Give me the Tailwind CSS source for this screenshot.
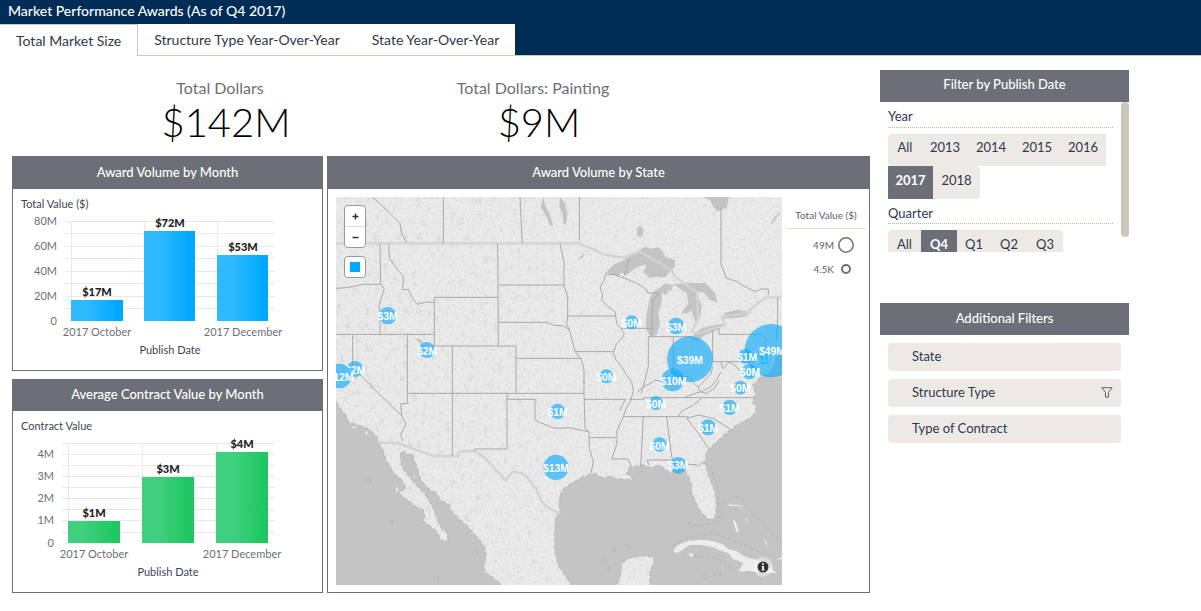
<!DOCTYPE html>
<html lang="en">
<head>
<meta charset="utf-8">
<meta name="viewport" content="width=device-width, initial-scale=1">
<title>Market Performance Awards</title>
<script src="https://cdn.jsdelivr.net/npm/@tailwindcss/browser@4"></script>
</head>
<body class="bg-white font-['Lato',sans-serif] text-sm text-[#2e384d]">
<header class="border-b border-[#cdc8bc] bg-[#002d56]">
  <h1 class="h-6 px-2 text-sm leading-[22px] font-medium text-white">Market Performance Awards (As of Q4 2017)</h1>
  <nav role="tablist" class="-mb-px flex h-8 text-sm">
    <button role="tab" aria-selected="true" class="border-t border-r border-[#cdc8bc] bg-white px-4">Total Market Size</button>
    <button role="tab" class="border-b border-[#cdc8bc] bg-white px-4">Structure Type Year-Over-Year</button>
    <button role="tab" class="border-b border-[#cdc8bc] bg-white px-4">State Year-Over-Year</button>
  </nav>
</header>

<div class="flex items-start gap-[10px] pr-[72px] pl-3">
<main class="min-w-0 flex-1 pt-5">
  <section class="flex text-center">
    <div class="w-[416px]"><h2 class="text-base leading-6 text-[#6c6f77]">Total Dollars</h2><p class="h-14 pl-3 text-[40px] leading-11 font-light text-black">$142M</p></div>
    <div class="w-[210px]"><h2 class="text-base leading-6 text-[#6c6f77]">Total Dollars: Painting</h2><p class="h-14 pl-3 text-[40px] leading-11 font-light text-black">$9M</p></div>
  </section>

  <div class="grid grid-cols-[311px_minmax(0,1fr)] items-start gap-x-1">
    <div class="flex flex-col gap-2">
      <section class="border border-[#6c6f77]">
        <h2 class="h-8 bg-[#6c6f77] text-center text-[13px] leading-[30px] font-medium text-white">Award Volume by Month</h2>
        <svg viewBox="0 0 309 181" class="block w-full" role="img" aria-label="Award volume by month">
          <defs><linearGradient id="blue"><stop offset=".3" stop-color="#2fb9ff"/><stop offset=".9" stop-color="#00a8ff"/></linearGradient></defs>
          <path d="M52 32.5H262M52 44.5H262M52 57.5H262M52 69.5H262M52 82.5H262M52 94.5H262M52 107.5H262M52 119.5H262M58.5 32V132M131.5 32V132M204.5 32V132" stroke="#e9e9e9" fill="none"/>
          <g fill="url(#blue)"><rect x="58" y="111" width="52" height="21"/><rect x="131" y="42" width="51" height="90"/><rect x="204" y="66" width="51" height="66"/></g>
          <g font-size="11" fill="#3b4559"><text x="8" y="19">Total Value ($)</text><text x="157" y="165" text-anchor="middle">Publish Date</text></g>
          <g font-size="11" fill="#6c6f77" text-anchor="end"><text x="44" y="36">80M</text><text x="44" y="61">60M</text><text x="44" y="86">40M</text><text x="44" y="111">20M</text><text x="44" y="136">0</text></g>
          <g font-size="11" fill="#6c6f77" text-anchor="middle"><text x="84" y="147">2017 October</text><text x="230" y="147">2017 December</text></g>
          <g font-size="11" font-weight="900" fill="#222" text-anchor="middle"><text x="84" y="107">$17M</text><text x="157" y="38">$72M</text><text x="230" y="62">$53M</text></g>
        </svg>
      </section>
      <section class="border border-[#6c6f77]">
        <h2 class="h-[31px] bg-[#6c6f77] text-center text-[13px] leading-7 font-medium text-white">Average Contract Value by Month</h2>
        <svg viewBox="0 0 309 181" class="block w-full" role="img" aria-label="Average contract value by month">
          <defs><linearGradient id="green"><stop offset=".3" stop-color="#40d080"/><stop offset=".9" stop-color="#1fc761"/></linearGradient></defs>
          <path d="M49 32.5H262M49 43.5H262M49 54.5H262M49 65.5H262M49 76.5H262M49 87.5H262M49 98.5H262M49 109.5H262M49 121.5H262M55.5 32V132M129.5 32V132M203.5 32V132" stroke="#e9e9e9" fill="none"/>
          <g fill="url(#green)"><rect x="55" y="110" width="52" height="22"/><rect x="129" y="66" width="52" height="66"/><rect x="203" y="41" width="52" height="91"/></g>
          <g font-size="11" fill="#3b4559"><text x="8" y="19">Contract Value</text><text x="155" y="165" text-anchor="middle">Publish Date</text></g>
          <g font-size="11" fill="#6c6f77" text-anchor="end"><text x="41" y="47">4M</text><text x="41" y="69">3M</text><text x="41" y="91">2M</text><text x="41" y="113">1M</text><text x="41" y="136">0</text></g>
          <g font-size="11" fill="#6c6f77" text-anchor="middle"><text x="81" y="147">2017 October</text><text x="229" y="147">2017 December</text></g>
          <g font-size="11" font-weight="900" fill="#222" text-anchor="middle"><text x="81" y="106">$1M</text><text x="155" y="62">$3M</text><text x="229" y="37">$4M</text></g>
        </svg>
      </section>
    </div>

    <section class="border border-[#6c6f77]">
      <h2 class="h-8 bg-[#6c6f77] text-center text-[13px] leading-[30px] font-medium text-white">Award Volume by State</h2>
      <div class="flex items-start gap-1 pt-2 pr-[3px] pb-[7px] pl-2">
        <div class="relative min-w-0 flex-1">
          <svg viewBox="0 0 1338 1164" class="block w-full" role="img" aria-label="Award volume map of the United States">
            <defs>
              <filter id="paper" x="0" y="0" width="100%" height="100%"><feTurbulence type="fractalNoise" baseFrequency=".13" numOctaves="3" seed="4"/><feColorMatrix values="0 0 0 0 .5  0 0 0 0 .5  0 0 0 0 .5  .6 0 0 0 -.24"/></filter>
              <filter id="relief" x="0" y="0" width="100%" height="100%"><feTurbulence type="fractalNoise" baseFrequency=".07 .045" numOctaves="3" seed="11"/><feColorMatrix values="0 0 0 0 .5  0 0 0 0 .5  0 0 0 0 .5  0 4 0 0 -2.4"/></filter>
              <linearGradient id="west"><stop offset="0" stop-color="#fff" stop-opacity=".4"/><stop offset=".4" stop-color="#fff" stop-opacity=".3"/><stop offset=".6" stop-color="#fff" stop-opacity=".08"/></linearGradient>
              <mask id="reliefMask"><rect width="1338" height="1164" fill="url(#west)"/></mask>
            </defs>
            <rect width="1338" height="1164" fill="#ebebeb"/>
            <rect width="1338" height="1164" filter="url(#paper)"/>
            <g mask="url(#reliefMask)"><rect width="1338" height="1164" filter="url(#relief)"/></g>

            <!-- oceans -->
            <g fill="#c4c4c4" stroke="#bcbcbc" stroke-width="4" stroke-linejoin="round" stroke-dasharray="14 7">
              <path d="M0 614L12 634 32 659 37 676 67 684 102 699 122 719 127 736 142 764 150 790 162 809 172 829 197 849 210 874 187 886 200 900 222 914 240 930 262 939 266 958 260 974 280 986 302 1004 312 1025 322 1034 337 1029 332 1004 318 996 307 974 298 950 292 934 278 910 267 889 250 874 237 859 217 834 205 820 197 804 192 767 205 764 214 773 230 772 234 790 242 809 252 844 266 864 282 879 300 887 312 909 342 925 342 939 372 969 392 985 412 1009 432 1030 447 1054 450 1082 442 1109 450 1128 467 1139 497 1164V1180H-10V614Z"/>
              <path d="M672 899L677 884 690 870 707 859 742 839 777 829 790 838 807 844 822 837 842 846 892 849 884 838 872 829 880 812 892 809 922 804 947 812 967 804 990 818 1002 829 1042 814 1057 839 1067 864 1065 880 1072 899 1087 934 1107 959 1122 969 1137 962 1142 924 1137 884 1117 834 1107 799 1112 764 1137 739 1177 704 1202 684 1242 664 1257 649 1262 629 1250 615 1259 590 1250 565 1262 554 1272 539 1297 529 1312 514 1320 480 1350 450V1180H942V1124L955 1094 952 1079 917 1076 877 1084 857 1099 852 1139 837 1180H717L687 1134 667 1104 657 1064 656 1010 659 964 672 940 670 920Z"/>
            </g>
            <g fill="none" stroke="#b2b2b2" stroke-width="2.5" stroke-dasharray="12 7">
              <path d="M1160 955Q1150 910 1190 902Q1225 900 1245 940L1290 990 1338 1038M1055 980Q1090 995 1130 975L1148 958V880L1120 800M1010 1045L1060 1020 1130 1010 1190 1030 1280 1070 1320 1080M1035 1075L1140 1080 1200 1125 1338 1130M1160 960L1125 1005"/>
              <circle cx="97" cy="850" r="8"/><circle cx="166" cy="975" r="5"/><circle cx="418" cy="1072" r="9"/><circle cx="300" cy="1145" r="8"/><circle cx="833" cy="1059" r="6"/><circle cx="878" cy="1049" r="7"/><circle cx="809" cy="1094" r="7"/><circle cx="816" cy="1113" r="5"/><circle cx="1107" cy="1140" r="7"/><circle cx="1146" cy="1130" r="8"/><circle cx="1065" cy="984" r="7"/>
            </g>
            <!-- islands -->
            <g fill="#ececec">
              <path d="M1012 1064Q1015 1048 1037 1039L1060 1031 1087 1029 1115 1030 1137 1034 1160 1042 1177 1056 1200 1062 1227 1079 1267 1090 1300 1108 1322 1129 1290 1128 1260 1124 1235 1122 1207 1124 1222 1098 1190 1085 1177 1069 1150 1060 1137 1052 1097 1044 1060 1044 1040 1058 1022 1069Z"/>
              <path d="M1058 1068L1072 1070 1070 1080 1060 1078ZM1190 968L1200 975 1210 1008 1200 1002ZM1178 922L1215 925 1220 940 1212 928 1178 926ZM1230 960L1236 972 1232 975ZM1280 1020L1298 1045 1290 1040ZM1318 1088L1338 1080V1086ZM45 690L65 688 55 694ZM90 700L98 712 88 712ZM232 835L238 840 234 846ZM180 868L188 878 180 884Z"/>
            </g>
            <!-- lakes -->
            <g fill="#c4c4c4">
              <path d="M807 229L832 204 872 184 890 172 902 164 927 149 945 155 967 151 980 162 987 179 1000 184 1017 188 1016 210 1003 222 987 241 960 239 940 242 922 226 932 205 920 204 897 214 872 234 858 226 845 240 830 232Z"/>
              <path d="M942 299L955 282 975 270 985 260 1012 264 1005 282 995 280 990 296 978 284 977 319 967 344 972 379 962 414 942 419 929 394 932 349Z"/>
              <path d="M1012 262L1057 257 1080 258 1107 259 1120 270 1137 289 1145 319 1138 314 1122 309 1107 290 1097 284 1082 289 1097 329 1092 364 1077 374 1067 339 1050 351 1036 347 1045 335 1057 319 1052 289Z"/>
              <path d="M1062 424L1097 394 1137 384 1172 379 1147 399 1107 414 1082 434ZM1154 364L1167 347 1202 339 1247 344 1227 359 1187 364Z"/>
              <path d="M1100 0L1122 9 1132 29 1145 44 1160 36 1172 34 1179 0ZM622 0L628 25 640 50 648 72 652 88 640 84 634 64 614 30ZM672 0L688 20 694 55 690 80 682 82 680 50 670 30ZM902 95L912 86 924 98 918 120 904 118ZM238 426L248 424 258 432 264 448 256 442ZM1305 80Q1315 55 1336 45Q1320 60 1310 80ZM725 185L745 170 740 184Z"/>
            </g>

            <!-- national borders -->
            <g fill="none" stroke="#d3d3d3" stroke-width="7" stroke-linejoin="round">
              <path d="M0 139H732L742 145 767 154 807 174 862 182 912 164 1007 219 1017 239 1057 269 1082 284 1087 364 1067 404 1087 409 1167 384 1157 359 1232 349 1257 324 1292 301H1338"/>
              <path d="M127 736L187 739 240 758 292 777H367V764L416 762 440 778 467 804 509 851 527 826Q552 822 572 839L600 875 617 914 640 935 672 949"/>
            </g>
            <!-- state and province borders -->
            <g fill="none" stroke="#a9a9a9" stroke-width="3" stroke-linejoin="round">
              <path d="M110 1L147 34 172 59 192 79 197 109 212 137M322 0V139M552 0L559 139M730 0V130M1155 32V204L1172 244 1200 252 1227 269 1257 284 1275 276 1297 276V294"/>
              <path d="M132 139L134 264 145 274 129 324 132 354V411M0 274L32 272 80 262H134M158 139L160 184 180 212 202 239 200 279 217 277 230 305 244 322 270 315 295 316M295 301H485M295 301V447H540M485 139L487 447M0 412H295M50 412V509L117 579 197 656M214 412V619L194 621 197 656 210 681 194 714 200 732M349 447V776"/>
              <path d="M487 264H687M487 376H637L650 384 682 387 702 399M540 484H737M540 447V589M214 589H744M513 589V756H416V762M513 607H597V669L615 678 632 684 650 692 672 694 700 692 717 696 757 704"/>
              <path d="M744 550V589L747 694 759 704 760 754 772 794 765 829M760 722H840M744 607H869L862 618 852 640"/>
              <path d="M672 139L685 199 683 230 685 269 695 299V357H837M695 357L692 379 702 405 717 464H832M717 464L737 489 744 519V560"/>
              <path d="M862 244L835 232 807 234 805 250 792 269 800 295 797 309 815 328 837 344 842 379 865 409 858 425 842 439 832 469 840 488 857 509 870 532 887 554 892 579 885 609 870 635 862 659 842 704 844 725 840 749 827 786H877L882 800 887 814M857 394H952M862 242L872 212 880 184M862 242L902 259 920 270 932 279 935 288 970 288 950 310 947 419M937 419V509L922 569 915 590M937 419H1067M1012 419V524"/>
              <path d="M905 585L922 569 942 560 957 549 975 553 992 540 1008 526 1030 540 1057 539 1075 560 1087 570 1107 549 1125 530 1130 509M1130 399V494H1257M1149 394V412H1277L1290 425 1285 440M1325 301V360L1322 430M1155 494L1160 515 1180 495 1197 505 1210 520 1247 539M1155 525L1140 550 1125 570 1097 584M1087 570L1092 584 1110 590 1135 575 1150 550"/>
              <path d="M879 607H922V602H1257M862 659H1057M1097 604L1070 625 1037 643 1027 658M922 659L914 809M992 659L1007 779 1012 789M934 789H1007L1012 799 1080 803 1088 808 1097 797 1107 799M1052 664L1087 654 1122 662 1132 664 1187 699M1052 664L1087 709 1105 735 1117 754M934 789L938 804M1045 602L1080 588 1097 584"/>
            </g>

            <!-- award bubbles, smaller ones under the large ones -->
            <g font-family="Liberation Sans" font-size="31" font-weight="700" text-anchor="middle">
              <g fill="#12acfb" fill-opacity=".66">
                <circle cx="155" cy="356" r="26"/><circle cx="273" cy="459" r="24"/><circle cx="57" cy="516" r="24"/>
                <circle cx="887" cy="376" r="21"/><circle cx="1020" cy="387" r="25"/><circle cx="1062" cy="487" r="69"/><circle cx="1010" cy="549" r="34"/><circle cx="811" cy="538" r="21"/>
                <circle cx="1228" cy="478" r="22"/><circle cx="1286" cy="480" r="21"/><circle cx="1240" cy="524" r="23"/><circle cx="1213" cy="572" r="21"/>
                <circle cx="665" cy="643" r="23"/><circle cx="660" cy="811" r="38"/><circle cx="960" cy="618" r="21"/><circle cx="1181" cy="631" r="23"/><circle cx="1116" cy="691" r="24"/><circle cx="971" cy="743" r="22"/><circle cx="1027" cy="805" r="25"/>
              </g>
              <g fill="#fff"><text x="57" y="532">$2M</text><text x="1288" y="494">$1M</text></g>
              <g fill="#12acfb" fill-opacity=".66"><circle cx="10" cy="537" r="37"/><circle cx="1306" cy="461" r="80"/></g>
              <g fill="#fff">
                <text x="155" y="368">$3M</text><text x="273" y="475">$2M</text><text x="14" y="552">$12M</text><text x="887" y="391">$0M</text><text x="1020" y="402">$3M</text><text x="1062" y="501">$39M</text><text x="1012" y="564">$10M</text><text x="811" y="552">$0M</text>
                <text x="1308" y="474">$49M</text><text x="1233" y="492">$1M</text><text x="1242" y="538">$0M</text><text x="1213" y="585">$0M</text>
                <text x="665" y="657">$1M</text><text x="660" y="824">$13M</text><text x="960" y="632">$0M</text><text x="1181" y="645">$1M</text><text x="1116" y="705">$1M</text><text x="971" y="758">$0M</text><text x="1027" y="817">$3M</text>
              </g>
            </g>
          </svg>
          <div class="absolute top-2 left-2 flex flex-col gap-2">
            <div class="flex w-[22px] flex-col rounded-sm border border-[#999] bg-white">
              <button aria-label="Zoom in" class="flex h-[21px] items-center justify-center border-b border-[#ddd]"><svg width="7" height="7" viewBox="0 0 7 7"><path d="M3.5 .5v6M.5 3.5h6" stroke="#333" stroke-width="1.5"/></svg></button>
              <button aria-label="Zoom out" class="flex h-5 items-center justify-center"><svg width="7" height="7" viewBox="0 0 7 7"><path d="M.5 3.5h6" stroke="#333" stroke-width="1.5"/></svg></button>
            </div>
            <button aria-label="Select area" class="flex size-[22px] items-center justify-center rounded-sm border border-[#999] bg-white"><span class="size-[10px] bg-[#00a8ff]"></span></button>
          </div>
          <button aria-label="Map information" class="absolute right-[9px] bottom-2 flex size-5 items-center justify-center rounded-full bg-white/40"><svg width="12" height="12" viewBox="0 0 12 12"><circle cx="6" cy="6" r="5.5" fill="#333"/><path d="M5 2.2h2v1.6H5zM4.6 4.9H7v3.6h.7v1H4.5v-1h.7V5.8h-.6z" fill="#fff"/></svg></button>
        </div>
        <aside class="w-20 text-[10px] text-[#5a6070]">
          <h3 class="h-8 border-b border-[#e3dfd4] pt-[10px] text-center leading-4">Total Value ($)</h3>
          <ul class="flex flex-col pt-1 pr-3">
            <li class="flex h-6 items-center justify-end gap-1">49M<svg width="16" height="16" viewBox="0 0 16 16"><circle cx="8" cy="8" r="7.2" fill="none" stroke="#6c6f77" stroke-width="1.5"/></svg></li>
            <li class="flex h-6 items-center justify-end gap-1">4.5K<svg width="16" height="16" viewBox="0 0 16 16"><circle cx="8" cy="8" r="4" fill="none" stroke="#6c6f77" stroke-width="2"/></svg></li>
          </ul>
        </aside>
      </div>
    </section>
  </div>
</main>

<aside class="flex w-[249px] flex-col pt-[14px] text-[13px]">
  <section>
    <h2 class="h-8 bg-[#6c6f77] text-center leading-7 font-medium text-white">Filter by Publish Date</h2>
    <div class="flex h-[150px] gap-2 overflow-hidden pl-2">
      <div class="flex-1 pt-1">
        <h3 class="mb-[6px] h-[22px] border-b border-dotted border-[#bdb5a2] leading-5">Year</h3>
        <div class="flex flex-wrap">
          <button class="h-8 w-[34px] rounded-l bg-[#edeae5] pb-[6px]">All</button><button class="h-8 w-[46px] bg-[#edeae5] pb-[6px]">2013</button><button class="h-8 w-[46px] bg-[#edeae5] pb-[6px]">2014</button><button class="h-8 w-[46px] bg-[#edeae5] pb-[6px]">2015</button><button class="h-8 w-[46px] bg-[#edeae5] pb-[6px]">2016</button>
          <button aria-pressed="true" class="h-[33px] w-[45px] bg-[#6c6f77] pb-1 font-bold text-white">2017</button><button class="h-[33px] w-[47px] rounded-r bg-[#edeae5] pb-1">2018</button>
        </div>
        <h3 class="mt-1 mb-[6px] h-[21px] border-b border-dotted border-[#bdb5a2] leading-5">Quarter</h3>
        <div class="flex">
          <button class="h-8 w-[33px] rounded-l bg-[#edeae5] pb-1">All</button><button aria-pressed="true" class="h-8 w-9 bg-[#6c6f77] pb-1 font-bold text-white">Q4</button><button class="h-8 w-[34px] bg-[#edeae5] pb-1">Q1</button><button class="h-8 w-9 bg-[#edeae5] pb-1">Q2</button><button class="h-8 w-9 rounded-r bg-[#edeae5] pb-1">Q3</button>
        </div>
      </div>
      <div class="h-[135px] w-2 rounded-full bg-[#ccc5b9]"></div>
    </div>
  </section>
  <section class="mt-[51px]">
    <h2 class="h-8 bg-[#6c6f77] text-center leading-[30px] font-medium text-white">Additional Filters</h2>
    <div class="flex flex-col gap-2 p-2">
      <button class="flex h-7 items-center rounded bg-[#edeae5] px-6 pb-[2px] text-left">State</button>
      <button class="flex h-7 items-center justify-between rounded bg-[#edeae5] pr-2 pb-[2px] pl-6 text-left">Structure Type<svg width="12" height="11" viewBox="0 0 12 11" fill="none" stroke="#59607a"><path d="M.8 .7h10.4L7.5 5.3v4.8h-3V5.3z"/></svg></button>
      <button class="flex h-7 items-center rounded bg-[#edeae5] px-6 pb-[2px] text-left">Type of Contract</button>
    </div>
  </section>
</aside>
</div>
</body>
</html>
